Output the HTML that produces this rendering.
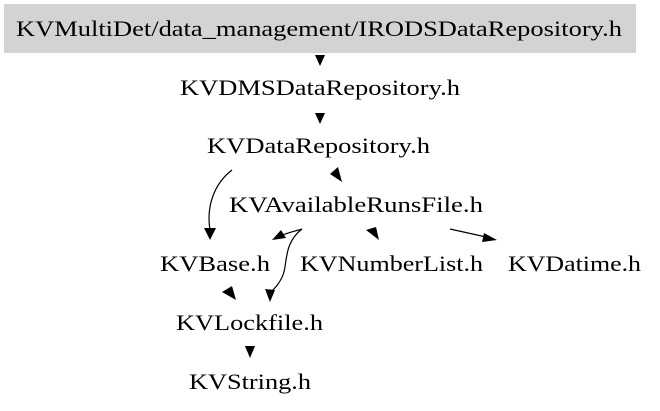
<!DOCTYPE html>
<html><head><meta charset="utf-8"><style>html,body{margin:0;padding:0;background:#fff;width:660px;height:411px;overflow:hidden}</style></head>
<body>
<svg width="660" height="411" viewBox="0 0 660 411" xmlns="http://www.w3.org/2000/svg" font-family="Liberation Serif, serif" font-size="22">
<rect x="4" y="4" width="632" height="49" fill="#d3d3d3"/>
<g fill="#000">
<text x="16" y="36" textLength="606" lengthAdjust="spacingAndGlyphs">KVMultiDet/data_management/IRODSDataRepository.h</text>
<text x="180" y="95" textLength="280" lengthAdjust="spacingAndGlyphs">KVDMSDataRepository.h</text>
<text x="207" y="153" textLength="223" lengthAdjust="spacingAndGlyphs">KVDataRepository.h</text>
<text x="229" y="212" textLength="254" lengthAdjust="spacingAndGlyphs">KVAvailableRunsFile.h</text>
<text x="160" y="271" textLength="110" lengthAdjust="spacingAndGlyphs">KVBase.h</text>
<text x="300" y="271" textLength="183" lengthAdjust="spacingAndGlyphs">KVNumberList.h</text>
<text x="508" y="271" textLength="133" lengthAdjust="spacingAndGlyphs">KVDatime.h</text>
<text x="176" y="330" textLength="147" lengthAdjust="spacingAndGlyphs">KVLockfile.h</text>
<text x="189" y="389" textLength="122" lengthAdjust="spacingAndGlyphs">KVString.h</text>
<polygon points="315,55 325,55 320,66"/>
<polygon points="315,113 325,113 320,124"/>
<polygon points="330,174 338,167 342,182"/>
<polygon points="204,228 216,228 210,240"/>
<polygon points="272,240 281,230 286,238"/>
<polygon points="366,230 376,227 379,240"/>
<polygon points="484,233 497,240 482,242"/>
<polygon points="222,292 232,286 236,300"/>
<polygon points="265,289 275,290 270,302"/>
<polygon points="245,346 255,346 250,358"/>
</g>
<g fill="none" stroke="#000" stroke-width="1.2">
<path d="M232,170 C215,183 206,205 210,230"/>
<path d="M302,229 C292,232 284,234 280,236"/>
<path d="M302,229 C285,242 287,260 284,272 C281,282 275,288 271,292"/>
<path d="M450,229 L486,237"/>
</g>
</svg>
</body></html>
